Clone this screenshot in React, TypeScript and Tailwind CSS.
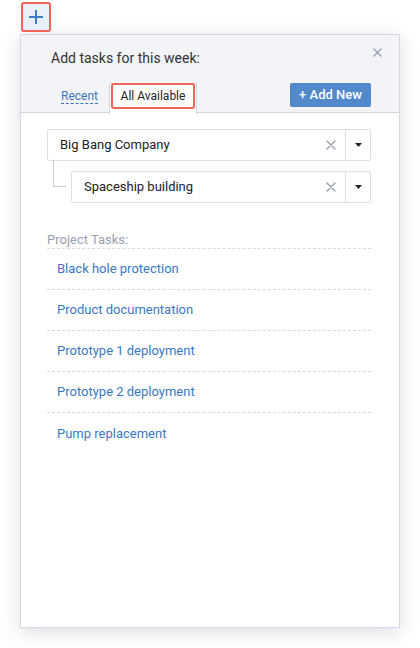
import React from "react";

const tasks = [
  "Black hole protection",
  "Product documentation",
  "Prototype 1 deployment",
  "Prototype 2 deployment",
  "Pump replacement",
];

function XIcon({ className }: { className?: string }) {
  return (
    <svg viewBox="0 0 10 10" className={className} fill="none" stroke="currentColor" strokeWidth="1.4" strokeLinecap="round">
      <path d="M1 1 L9 9 M9 1 L1 9" />
    </svg>
  );
}

function Select({ label }: { label: string }) {
  return (
    <div className="flex h-[32px] items-stretch rounded-[2px] border border-[#dcdfe4] bg-white">
      <div className="flex flex-1 items-center pl-[12px] text-[13px] text-[#222]">{label}</div>
      <div className="flex w-[28px] items-center justify-center text-[#9aa1ad]">
        <XIcon className="h-[10px] w-[10px]" />
      </div>
      <div className="flex w-[25px] items-center justify-center border-l border-[#dcdfe4]">
        <svg viewBox="0 0 7 4" className="h-[4px] w-[7px]">
          <path d="M0 0 L7 0 L3.5 4 Z" fill="#222" />
        </svg>
      </div>
    </div>
  );
}

export default function App() {
  return (
    <div className="relative h-[648px] w-[420px] bg-white" style={{ fontFamily: "Roboto, 'Liberation Sans', sans-serif" }}>
      <div className="absolute left-[21px] top-[2px] z-10 flex h-[30px] w-[30px] items-center justify-center rounded-[3px] border-2 border-[#f06356] bg-[#e8f1fb]">
        <svg viewBox="0 0 14 14" className="h-[14px] w-[14px]" stroke="#3f7cc7" strokeWidth="2">
          <path d="M7 0 V14 M0 7 H14" />
        </svg>
      </div>
      <div className="absolute left-[20px] top-[34px] flex h-[594px] w-[380px] flex-col border border-[#d5d8e0] bg-white shadow-[0_4px_18px_rgba(60,70,100,0.18)]">
        <div className="relative h-[78px] border-b border-[#d5d8e0] bg-[#f3f4f8]">
          <div className="absolute left-[30px] top-[13px] text-[14px] text-[#333]">Add tasks for this week:</div>
          <div className="absolute right-[17px] top-[13px] text-[#8c93a0]">
            <XIcon className="h-[9px] w-[9px]" />
          </div>
          <div className="absolute left-[40px] top-[54px] border-b border-dashed border-[#3a78c3] text-[12px] leading-[14px] text-[#3a78c3]">Recent</div>
          <div className="absolute left-[88px] top-[48px] h-[31px] w-[88px] border-x border-t border-[#d5d8e0] bg-white" />
          <div className="absolute left-[90px] top-[48px] flex h-[26px] w-[84px] items-center justify-center rounded-[3px] border-2 border-[#f06356] bg-white text-[12px] text-[#222]">
            All Available
          </div>
          <div className="absolute left-[269px] top-[48px] flex h-[24px] w-[81px] items-center justify-center rounded-[2px] bg-[#5189cb] text-[13px] font-medium text-white">
            + Add New
          </div>
        </div>
        <div className="flex flex-col pl-[26px] pr-[28px] pt-[16px]">
          <Select label="Big Bang Company" />
          <div className="relative mt-[10px] pl-[24px]">
            <div className="absolute left-[6px] top-[-11px] h-[27px] w-[13px] border-b border-l border-[#c9ccd3]" />
            <Select label="Spaceship building" />
          </div>
          <div className="mt-[29px] text-[13px] leading-[15px] text-[#9aa1ad]">Project Tasks:</div>
          <div className="mt-[1px] border-t border-dashed border-[#d7dae1]">
            {tasks.map((t, i) => (
              <div
                key={t}
                className={`flex h-[41px] items-center pl-[10px] text-[13px] text-[#3a78c3] ${i < tasks.length - 1 ? "border-b border-dashed border-[#d7dae1]" : ""}`}
              >
                {t}
              </div>
            ))}
          </div>
        </div>
      </div>
    </div>
  );
}
